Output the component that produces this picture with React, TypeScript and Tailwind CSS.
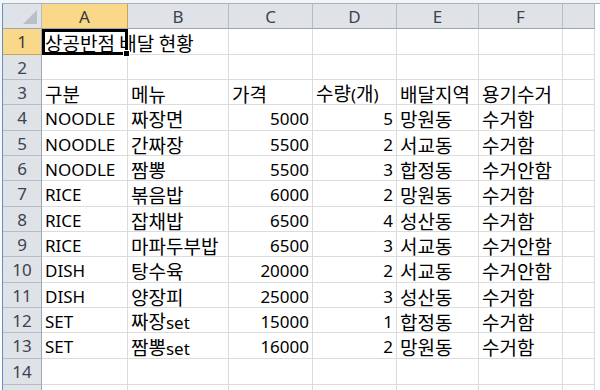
import React from 'react';

type Row = [string, string, string, string, string, string];

const data: Row[] = [
  ['상공반점 배달 현황', '', '', '', '', ''],
  ['', '', '', '', '', ''],
  ['구분', '메뉴', '가격', '수량(개)', '배달지역', '용기수거'],
  ['NOODLE', '짜장면', '5000', '5', '망원동', '수거함'],
  ['NOODLE', '간짜장', '5500', '2', '서교동', '수거함'],
  ['NOODLE', '짬뽕', '5500', '3', '합정동', '수거안함'],
  ['RICE', '볶음밥', '6000', '2', '망원동', '수거함'],
  ['RICE', '잡채밥', '6500', '4', '성산동', '수거함'],
  ['RICE', '마파두부밥', '6500', '3', '서교동', '수거안함'],
  ['DISH', '탕수육', '20000', '2', '서교동', '수거안함'],
  ['DISH', '양장피', '25000', '3', '성산동', '수거함'],
  ['SET', '짜장set', '15000', '1', '합정동', '수거함'],
  ['SET', '짬뽕set', '16000', '2', '망원동', '수거함'],
  ['', '', '', '', '', ''],
  ['', '', '', '', '', ''],
];

const columns = ['A', 'B', 'C', 'D', 'E', 'F', ''];

const isNumber = (v: string) => /^\d+$/.test(v);

// hangul glyphs run a bit larger than latin ones in the original sheet
function CellText({ value }: { value: string }) {
  const parts = value.match(/[\uac00-\ud7a3]+|[^\uac00-\ud7a3]+/g) ?? [];
  return (
    <span className="pt-[2px]">
      {parts.map((p, i) =>
        /[\uac00-\ud7a3]/.test(p) ? (
          <span key={i} className="text-[19px]">{p}</span>
        ) : (
          <span key={i} className="text-[17px]" style={{ fontFamily: '"Noto Sans", "Noto Sans CJK KR", sans-serif' }}>
            {p}
          </span>
        ),
      )}
    </span>
  );
}

export default function App() {
  return (
    <div
      className="w-[600px] h-[390px] overflow-hidden pt-[3px] pl-[2px] bg-gradient-to-b from-[#f3f4f6] to-white"
      style={{ fontFamily: '"Noto Sans CJK KR", "Noto Sans", sans-serif' }}
    >
      <div className="grid grid-cols-[39px_86px_101px_84px_84px_82px_84px_32px] grid-rows-[25px_26px_25px_25px_26px_25px_25px_26px_25px_25px_26px_25px_25px_26px_26px_25px] border-l border-t border-l-[#5b8fd0] border-t-[#a9b0ba] bg-white leading-none">
        {/* corner */}
        <div className="relative bg-[#dfe3e8] border-r border-b border-r-[#b6bcc6] border-b-[#9ea6b2]">
          <svg className="absolute right-[4px] bottom-[4px]" width="14" height="14" viewBox="0 0 14 14">
            <polygon points="14,0 14,14 0,14" fill="#b9c0ca" />
          </svg>
        </div>
        {columns.map((c, i) => (
          <div
            key={i}
            className={`flex items-center justify-center border-r border-b border-b-[#9ea6b2] text-[17px] ${
              i === 0 ? 'bg-[#f9d889] border-r-[#c9a454] text-[#3a3a3a]' : 'bg-[#dfe3e8] border-r-[#b6bcc6] text-[#3b4350]'
            }`}
            style={{ fontFamily: '"Noto Sans", sans-serif' }}
          >
            {c}
          </div>
        ))}

        {data.map((row, r) => (
          <React.Fragment key={r}>
            <div
              className={`flex items-center justify-center border-r border-b border-r-[#9ea6b2] text-[17px] ${
                r === 0 ? 'bg-[#f9d889] border-b-[#c9a454] text-[#3a3a3a]' : 'bg-[#dfe3e8] border-b-[#b6bcc6] text-[#3b4350]'
              }`}
              style={{ fontFamily: '"Noto Sans", sans-serif' }}
            >
              {r < 14 ? r + 1 : ''}
            </div>
            {[...row, ''].map((v, c) => (
              <div
                key={c}
                className={`relative flex items-center px-[3px] border-r border-b border-[#dcdcdc] text-black whitespace-nowrap ${
                  isNumber(v) ? 'justify-end' : 'justify-start'
                } ${r === 0 && c === 0 ? 'z-10' : ''}`}
              >
                <CellText value={v} />
                {r === 0 && c === 0 && (
                  <>
                    <div className="absolute left-0 top-0 right-[-1px] bottom-[-1px] border-[3px] border-black" />
                    <div className="absolute right-[-3px] bottom-[-3px] w-[7px] h-[7px] bg-black border border-white" />
                  </>
                )}
              </div>
            ))}
          </React.Fragment>
        ))}
      </div>
    </div>
  );
}
